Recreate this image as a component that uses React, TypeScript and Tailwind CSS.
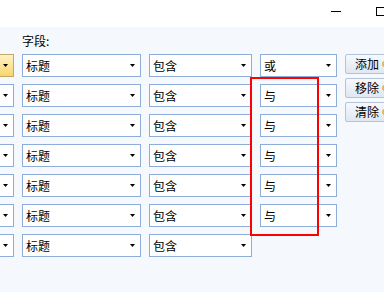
const cjk = { fontFamily: '"Noto Sans CJK SC", "Noto Sans", sans-serif' }

function Arrow() {
    return (
        <svg width="5" height="3" viewBox="0 0 5 3" className="shrink-0">
            <path d="M0 0h5L2.5 3z" fill="#000" />
        </svg>
    )
}

function Combo({ width, text, hot }: { width: string; text?: string; hot?: boolean }) {
    return (
        <div
            className={`h-[23px] ${width} shrink-0 border flex items-center justify-between pl-[3px] pr-[5px] text-[12px] leading-none text-black ${
                hot ? 'border-[#c4a86a] bg-gradient-to-b from-[#fff3c4] to-[#f8d56c]' : 'border-[#8fadda] bg-white'
            }`}
        >
            <span>{text}</span>
            <Arrow />
        </div>
    )
}

function Btn({ label }: { label: string }) {
    return (
        <div className="h-[20px] w-[50px] border border-[#b3c3da] rounded-[2px] bg-gradient-to-b from-[#f7f9fc] to-[#dfe7f2] flex items-center pl-[9px] text-[12px] leading-none text-black">
            <span>{label}</span>
            <span className="ml-[3px] w-[5px] h-[6px] rounded-full bg-[#e9b84c]" />
        </div>
    )
}

const rows = ['或', '与', '与', '与', '与', '与', null]

export default function App() {
    return (
        <div className="relative w-[384px] h-[292px] overflow-hidden bg-[#f5f8fd]" style={cjk}>
            <div className="h-[27px] bg-white relative">
                <div className="absolute left-[331px] top-[11px] w-[10px] h-px bg-black" />
                <div className="absolute left-[376px] top-[7px] w-[12px] h-[9px] border border-black" />
            </div>

            <div className="ml-[22px] mt-[6px] h-[16px] leading-[16px] text-[12px] text-black">字段:</div>

            <div className="flex gap-[8px] mt-[5px] ml-[-20px]">
                <div className="flex flex-col gap-[7px]">
                    {rows.map((r, i) => (
                        <div key={i} className="flex gap-[8px]">
                            <Combo width="w-[34px]" hot={i === 0} />
                            <Combo width="w-[119px]" text="标题" />
                            <Combo width="w-[103px]" text="包含" />
                            {r && <Combo width="w-[77px]" text={r} />}
                        </div>
                    ))}
                </div>
                <div className="flex flex-col gap-[4px]">
                    <Btn label="添加" />
                    <Btn label="移除" />
                    <Btn label="清除" />
                </div>
            </div>

            <div className="absolute left-[250px] top-[77px] w-[69px] h-[159px] border-2 border-[#f00]" />
        </div>
    )
}
